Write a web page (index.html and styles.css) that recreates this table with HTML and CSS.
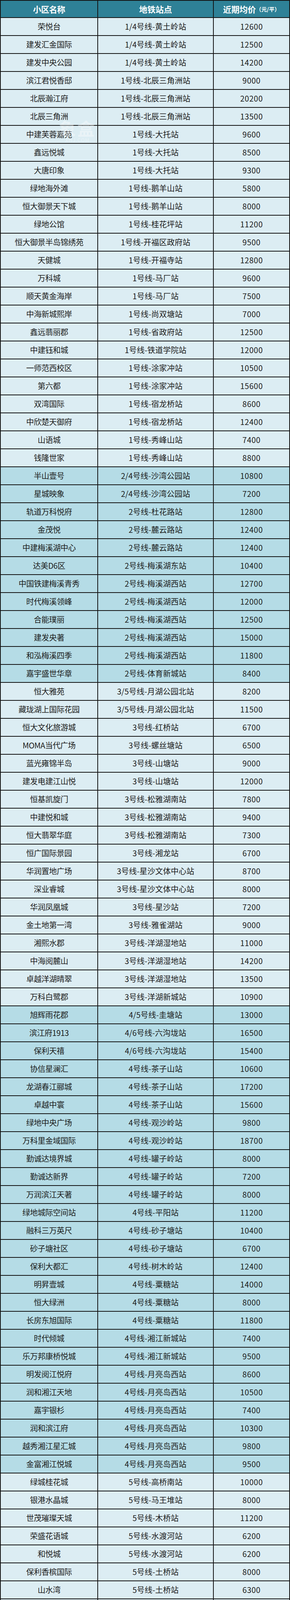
FILE: index.html
```html
<!DOCTYPE html>
<html lang="zh-CN">
<head>
<meta charset="utf-8">
<title>长沙地铁沿线楼盘均价</title>
<link rel="stylesheet" href="styles.css">
</head>
<body>
<div class="table">
  <div class="row head">
    <div class="cell">小区名称</div>
    <div class="cell">地铁站点</div>
    <div class="cell">近期均价<span class="unit">（元/平）</span></div>
  </div>

  <div class="row light"><div class="cell">荣悦台</div><div class="cell">1/4号线-黄土岭站</div><div class="cell">12600</div></div>
  <div class="row light"><div class="cell">建发汇金国际</div><div class="cell">1/4号线-黄土岭站</div><div class="cell">12500</div></div>
  <div class="row light"><div class="cell">建发中央公园</div><div class="cell">1/4号线-黄土岭站</div><div class="cell">14200</div></div>
  <div class="row light"><div class="cell">滨江君悦香邸</div><div class="cell">1号线-北辰三角洲站</div><div class="cell">9000</div></div>
  <div class="row light"><div class="cell">北辰瀚江府</div><div class="cell">1号线-北辰三角洲站</div><div class="cell">20200</div></div>
  <div class="row light"><div class="cell">北辰三角洲</div><div class="cell">1号线-北辰三角洲站</div><div class="cell">13500</div></div>
  <div class="row light"><div class="cell">中建芙蓉嘉苑</div><div class="cell">1号线-大托站</div><div class="cell">9600</div></div>
  <div class="row light"><div class="cell">鑫远悦城</div><div class="cell">1号线-大托站</div><div class="cell">8500</div></div>
  <div class="row light"><div class="cell">大唐印象</div><div class="cell">1号线-大托站</div><div class="cell">9300</div></div>
  <div class="row light"><div class="cell">绿地海外滩</div><div class="cell">1号线-鹅羊山站</div><div class="cell">5800</div></div>
  <div class="row light"><div class="cell">恒大御景天下城</div><div class="cell">1号线-鹅羊山站</div><div class="cell">8000</div></div>
  <div class="row light"><div class="cell">绿地公馆</div><div class="cell">1号线-桂花坪站</div><div class="cell">11200</div></div>
  <div class="row light"><div class="cell">恒大御景半岛锦绣苑</div><div class="cell">1号线-开福区政府站</div><div class="cell">9500</div></div>
  <div class="row light"><div class="cell">天健城</div><div class="cell">1号线-开福寺站</div><div class="cell">12800</div></div>
  <div class="row light"><div class="cell">万科城</div><div class="cell">1号线-马厂站</div><div class="cell">9600</div></div>
  <div class="row light"><div class="cell">顺天黄金海岸</div><div class="cell">1号线-马厂站</div><div class="cell">7500</div></div>
  <div class="row light"><div class="cell">中海新城熙岸</div><div class="cell">1号线-尚双塘站</div><div class="cell">7000</div></div>
  <div class="row light"><div class="cell">鑫远翡丽郡</div><div class="cell">1号线-省政府站</div><div class="cell">12500</div></div>
  <div class="row light"><div class="cell">中建钰和城</div><div class="cell">1号线-铁道学院站</div><div class="cell">12000</div></div>
  <div class="row light"><div class="cell">一师范西校区</div><div class="cell">1号线-涂家冲站</div><div class="cell">10500</div></div>
  <div class="row light"><div class="cell">第六都</div><div class="cell">1号线-涂家冲站</div><div class="cell">15600</div></div>
  <div class="row light"><div class="cell">双湾国际</div><div class="cell">1号线-宿龙桥站</div><div class="cell">8600</div></div>
  <div class="row light"><div class="cell">中欣楚天御府</div><div class="cell">1号线-宿龙桥站</div><div class="cell">12400</div></div>
  <div class="row light"><div class="cell">山语城</div><div class="cell">1号线-秀峰山站</div><div class="cell">7400</div></div>
  <div class="row light"><div class="cell">钱隆世家</div><div class="cell">1号线-秀峰山站</div><div class="cell">8800</div></div>

  <div class="row blue"><div class="cell">半山壹号</div><div class="cell">2/4号线-沙湾公园站</div><div class="cell">10800</div></div>
  <div class="row blue"><div class="cell">星城映象</div><div class="cell">2/4号线-沙湾公园站</div><div class="cell">7200</div></div>
  <div class="row blue"><div class="cell">轨道万科悦府</div><div class="cell">2号线-杜花路站</div><div class="cell">12800</div></div>
  <div class="row blue"><div class="cell">金茂悦</div><div class="cell">2号线-麓云路站</div><div class="cell">12400</div></div>
  <div class="row blue"><div class="cell">中建梅溪湖中心</div><div class="cell">2号线-麓云路站</div><div class="cell">12400</div></div>
  <div class="row blue"><div class="cell">达美D6区</div><div class="cell">2号线-梅溪湖东站</div><div class="cell">10400</div></div>
  <div class="row blue"><div class="cell">中国铁建梅溪青秀</div><div class="cell">2号线-梅溪湖西站</div><div class="cell">12700</div></div>
  <div class="row blue"><div class="cell">时代梅溪领峰</div><div class="cell">2号线-梅溪湖西站</div><div class="cell">12000</div></div>
  <div class="row blue"><div class="cell">合能璞丽</div><div class="cell">2号线-梅溪湖西站</div><div class="cell">12500</div></div>
  <div class="row blue"><div class="cell">建发央著</div><div class="cell">2号线-梅溪湖西站</div><div class="cell">15000</div></div>
  <div class="row blue"><div class="cell">和泓梅溪四季</div><div class="cell">2号线-梅溪湖西站</div><div class="cell">11800</div></div>
  <div class="row blue"><div class="cell">嘉宇盛世华章</div><div class="cell">2号线-体育新城站</div><div class="cell">8400</div></div>

  <div class="row light"><div class="cell">恒大雅苑</div><div class="cell">3/5号线-月湖公园北站</div><div class="cell">8200</div></div>
  <div class="row light"><div class="cell">藏珑湖上国际花园</div><div class="cell">3/5号线-月湖公园北站</div><div class="cell">11500</div></div>
  <div class="row light"><div class="cell">恒大文化旅游城</div><div class="cell">3号线-红桥站</div><div class="cell">6700</div></div>
  <div class="row light"><div class="cell">MOMA当代广场</div><div class="cell">3号线-螺丝塘站</div><div class="cell">6500</div></div>
  <div class="row light"><div class="cell">蓝光雍锦半岛</div><div class="cell">3号线-山塘站</div><div class="cell">9000</div></div>
  <div class="row light"><div class="cell">建发电建江山悦</div><div class="cell">3号线-山塘站</div><div class="cell">12000</div></div>
  <div class="row light"><div class="cell">恒基凯旋门</div><div class="cell">3号线-松雅湖南站</div><div class="cell">7800</div></div>
  <div class="row light"><div class="cell">中建悦和城</div><div class="cell">3号线-松雅湖南站</div><div class="cell">9400</div></div>
  <div class="row light"><div class="cell">恒大翡翠华庭</div><div class="cell">3号线-松雅湖南站</div><div class="cell">7300</div></div>
  <div class="row light"><div class="cell">恒广国际景园</div><div class="cell">3号线-湘龙站</div><div class="cell">6700</div></div>
  <div class="row light"><div class="cell">华润置地广场</div><div class="cell">3号线-星沙文体中心站</div><div class="cell">8700</div></div>
  <div class="row light"><div class="cell">深业睿城</div><div class="cell">3号线-星沙文体中心站</div><div class="cell">8000</div></div>
  <div class="row light"><div class="cell">华润凤凰城</div><div class="cell">3号线-星沙站</div><div class="cell">7200</div></div>
  <div class="row light"><div class="cell">金土地第一湾</div><div class="cell">3号线-雅雀湖站</div><div class="cell">9000</div></div>
  <div class="row light"><div class="cell">湘熙水郡</div><div class="cell">3号线-洋湖湿地站</div><div class="cell">11000</div></div>
  <div class="row light"><div class="cell">中海阅麓山</div><div class="cell">3号线-洋湖湿地站</div><div class="cell">14200</div></div>
  <div class="row light"><div class="cell">卓越洋湖晴翠</div><div class="cell">3号线-洋湖湿地站</div><div class="cell">13500</div></div>
  <div class="row light"><div class="cell">万科白鹭郡</div><div class="cell">3号线-洋湖新城站</div><div class="cell">10900</div></div>

  <div class="row blue"><div class="cell">旭辉雨花郡</div><div class="cell">4/5号线-圭塘站</div><div class="cell">13000</div></div>
  <div class="row blue"><div class="cell">滨江府1913</div><div class="cell">4/6号线-六沟垅站</div><div class="cell">16500</div></div>
  <div class="row blue"><div class="cell">保利天禧</div><div class="cell">4/6号线-六沟垅站</div><div class="cell">15400</div></div>
  <div class="row blue"><div class="cell">协信星澜汇</div><div class="cell">4号线-茶子山站</div><div class="cell">10600</div></div>
  <div class="row blue"><div class="cell">龙湖春江郦城</div><div class="cell">4号线-茶子山站</div><div class="cell">17200</div></div>
  <div class="row blue"><div class="cell">卓越中寰</div><div class="cell">4号线-茶子山站</div><div class="cell">15600</div></div>
  <div class="row blue"><div class="cell">绿地中央广场</div><div class="cell">4号线-观沙岭站</div><div class="cell">9800</div></div>
  <div class="row blue"><div class="cell">万科里金域国际</div><div class="cell">4号线-观沙岭站</div><div class="cell">18700</div></div>
  <div class="row blue"><div class="cell">勤诚达境界城</div><div class="cell">4号线-罐子岭站</div><div class="cell">8000</div></div>
  <div class="row blue"><div class="cell">勤诚达新界</div><div class="cell">4号线-罐子岭站</div><div class="cell">7200</div></div>
  <div class="row blue"><div class="cell">万润滨江天著</div><div class="cell">4号线-罐子岭站</div><div class="cell">8000</div></div>
  <div class="row blue"><div class="cell">绿地城际空间站</div><div class="cell">4号线-平阳站</div><div class="cell">11200</div></div>
  <div class="row blue"><div class="cell">融科三万英尺</div><div class="cell">4号线-砂子塘站</div><div class="cell">10400</div></div>
  <div class="row blue"><div class="cell">砂子塘社区</div><div class="cell">4号线-砂子塘站</div><div class="cell">6700</div></div>
  <div class="row blue"><div class="cell">保利大都汇</div><div class="cell">4号线-树木岭站</div><div class="cell">12400</div></div>
  <div class="row blue"><div class="cell">明昇壹城</div><div class="cell">4号线-粟糖站</div><div class="cell">14000</div></div>
  <div class="row blue"><div class="cell">恒大绿洲</div><div class="cell">4号线-粟糖站</div><div class="cell">8000</div></div>
  <div class="row blue"><div class="cell">长房东旭国际</div><div class="cell">4号线-粟糖站</div><div class="cell">11800</div></div>
  <div class="row blue"><div class="cell">时代倾城</div><div class="cell">4号线-湘江新城站</div><div class="cell">7400</div></div>
  <div class="row blue"><div class="cell">乐万邦康桥悦城</div><div class="cell">4号线-湘江新城站</div><div class="cell">9500</div></div>
  <div class="row blue"><div class="cell">明发阅江悦府</div><div class="cell">4号线-月亮岛西站</div><div class="cell">8600</div></div>
  <div class="row blue"><div class="cell">润和湘江天地</div><div class="cell">4号线-月亮岛西站</div><div class="cell">10500</div></div>
  <div class="row blue"><div class="cell">嘉宇银杉</div><div class="cell">4号线-月亮岛西站</div><div class="cell">7400</div></div>
  <div class="row blue"><div class="cell">润和滨江府</div><div class="cell">4号线-月亮岛西站</div><div class="cell">10300</div></div>
  <div class="row blue"><div class="cell">越秀湘江星汇城</div><div class="cell">4号线-月亮岛西站</div><div class="cell">9800</div></div>
  <div class="row blue"><div class="cell">金富湘江悦城</div><div class="cell">4号线-月亮岛西站</div><div class="cell">9500</div></div>

  <div class="row light"><div class="cell">绿城桂花城</div><div class="cell">5号线-高桥南站</div><div class="cell">10000</div></div>
  <div class="row light"><div class="cell">银港水晶城</div><div class="cell">5号线-马王堆站</div><div class="cell">8000</div></div>
  <div class="row light"><div class="cell">世茂璀璨天城</div><div class="cell">5号线-木桥站</div><div class="cell">11200</div></div>
  <div class="row light"><div class="cell">荣盛花语城</div><div class="cell">5号线-水渡河站</div><div class="cell">6200</div></div>
  <div class="row light"><div class="cell">和悦城</div><div class="cell">5号线-水渡河站</div><div class="cell">6200</div></div>
  <div class="row light"><div class="cell">保利香槟国际</div><div class="cell">5号线-土桥站</div><div class="cell">8000</div></div>
  <div class="row light"><div class="cell">山水湾</div><div class="cell">5号线-土桥站</div><div class="cell">6300</div></div>
  <div class="row light"><div class="cell">东玺门</div><div class="cell">5号线-万家丽广场站</div><div class="cell">8500</div></div>
  <div class="row light"><div class="cell">东方新城</div><div class="cell">5号线-万家丽广场站</div><div class="cell">7100</div></div>
  <div class="row light"><div class="cell">万科金域华府</div><div class="cell">5号线-雨花区政府站</div><div class="cell">12000</div></div>

  <div class="row blue"><div class="cell">爵世名邸东湖</div><div class="cell">6号线-东湖站</div><div class="cell">8500</div></div>
  <div class="row blue"><div class="cell">万科金色梦想</div><div class="cell">6号线-和馨园站</div><div class="cell">12300</div></div>
  <div class="row blue"><div class="cell">德奥悦东方</div><div class="cell">6号线-花桥站</div><div class="cell">11800</div></div>
  <div class="row blue"><div class="cell">江河双水湾</div><div class="cell">6号线-花桥站</div><div class="cell">9000</div></div>
  <div class="row blue"><div class="cell">中交中央公园</div><div class="cell">6号线-隆平水稻博物馆站</div><div class="cell">10000</div></div>
  <div class="row blue"><div class="cell">保利麓谷林语</div><div class="cell">6号线-麓谷体育公园站</div><div class="cell">8200</div></div>
  <div class="row blue"><div class="cell">梅溪鑫苑名家</div><div class="cell">6号线-一师范西校区站</div><div class="cell">9700</div></div>
  <div class="row blue"><div class="cell">旭辉御府</div><div class="cell">6号线-一师范西校区站</div><div class="cell">9800</div></div>
  <div class="row blue"><div class="cell">中海阅溪府</div><div class="cell">6号线-中塘站</div><div class="cell">14000</div></div>

  <div class="watermark" aria-hidden="true"><span class="wm-big">象盒</span><span class="wm-small">XHJ.COM</span></div>
</div>
</body>
</html>
```

FILE: styles.css
```css
html, body {
  margin: 0;
  padding: 0;
  background: #ffffff;
}

body {
  font-family: "Noto Sans CJK SC", "Noto Sans", sans-serif;
  color: #1c1c1c;
}

.table {
  position: relative;
  width: 742px;
  box-sizing: border-box;
  padding: 2px;
  background: #141414;
  display: grid;
  grid-template-columns: 247px 294px 193px;
  grid-template-rows: 42px;
  grid-auto-rows: 44px;
  gap: 2px;
}

.row {
  display: contents;
}

.cell {
  display: flex;
  align-items: center;
  justify-content: center;
  height: 100%;
  min-height: 0;
  overflow: hidden;
  font-size: 20px;
  line-height: 24px;
  white-space: nowrap;
  letter-spacing: -0.5px;
}

.row .cell:nth-child(2) {
  letter-spacing: 0;
}

.row .cell:nth-child(3) {
  letter-spacing: 0.5px;
}

.head .cell {
  background: #2e8197;
  color: #ffffff;
  font-weight: 700;
  font-size: 21px;
}

.head .cell:nth-child(3) {
  letter-spacing: 0;
}

.head .unit {
  font-size: 14px;
  font-weight: 700;
  letter-spacing: 0;
}

.light .cell {
  background: #dcedf3;
}

.blue .cell {
  background: #b5dce6;
}

.watermark {
  position: absolute;
  left: 150px;
  top: 306px;
  display: flex;
  flex-direction: column;
  align-items: center;
  color: rgba(255, 255, 255, 0.4);
  pointer-events: none;
}

.wm-big {
  font-size: 44px;
  font-weight: 700;
  line-height: 1;
  letter-spacing: 4px;
}

.wm-small {
  font-size: 13px;
  line-height: 1;
  margin-top: 2px;
  letter-spacing: 1px;
}
```
